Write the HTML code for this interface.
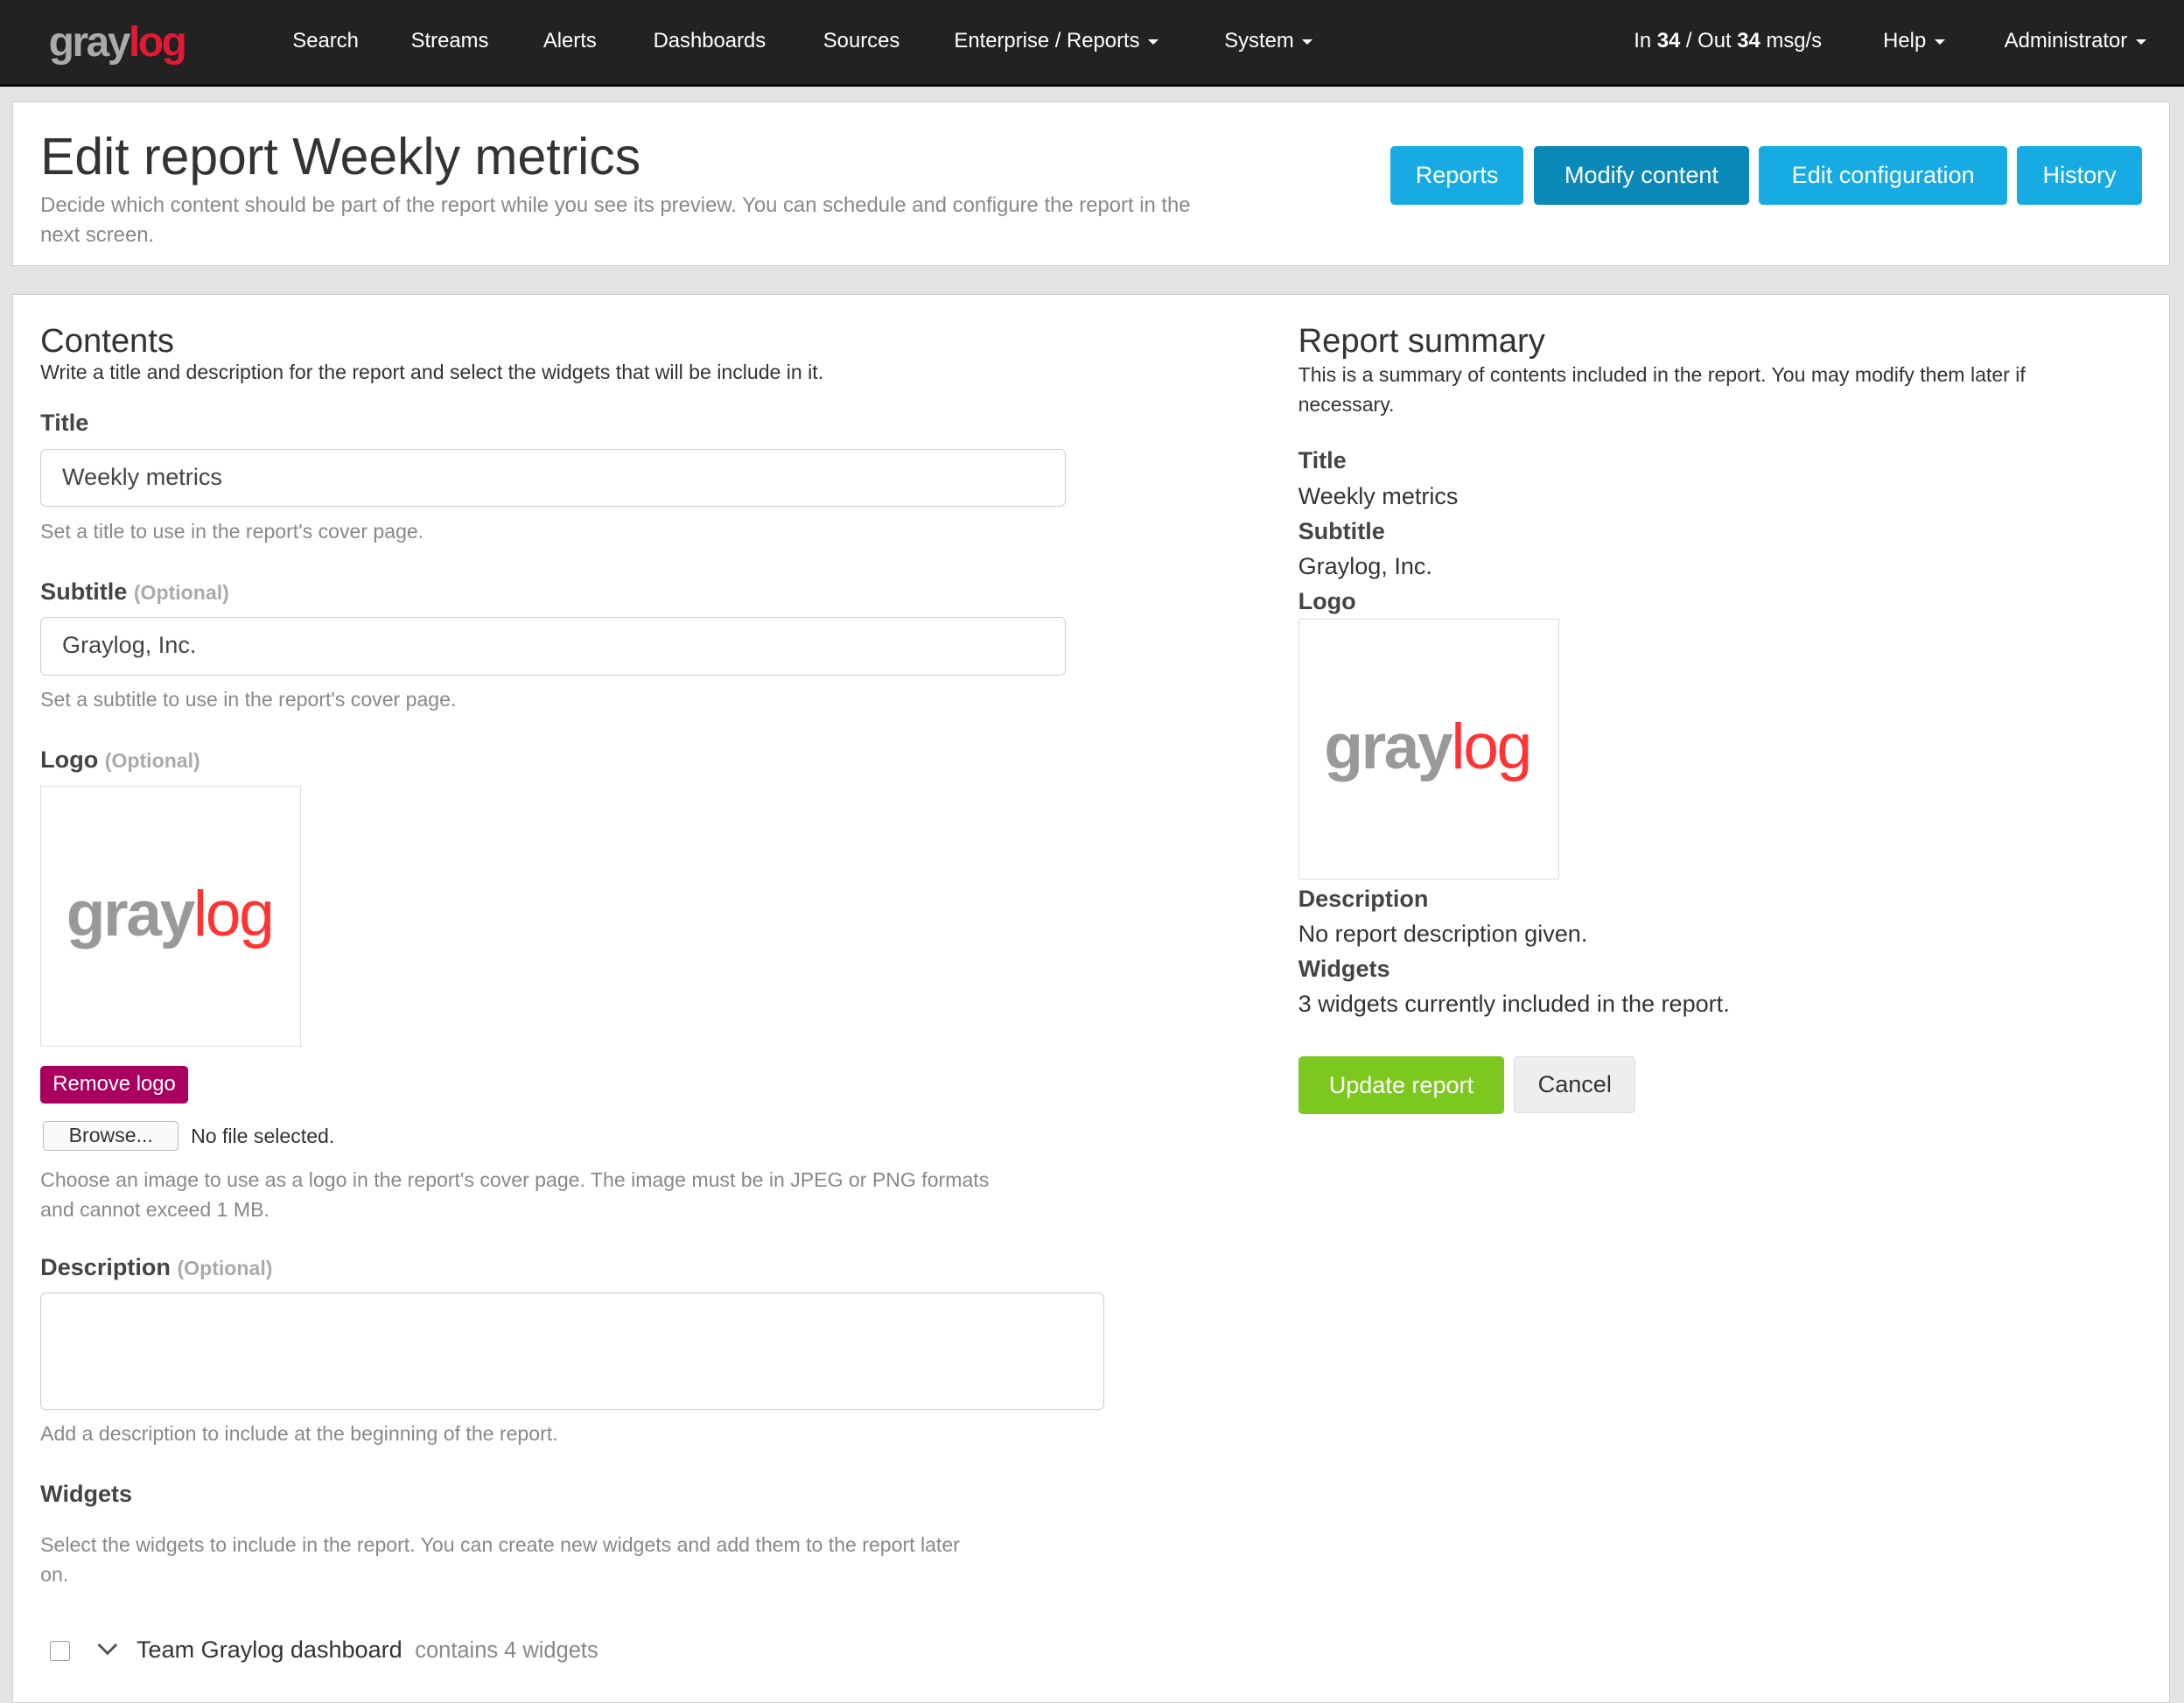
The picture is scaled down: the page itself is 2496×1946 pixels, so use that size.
<!DOCTYPE html>
<html><head><meta charset="utf-8"><style>
html,body{margin:0;padding:0;}
body{width:1568px;height:1204px;overflow:hidden;zoom:1.59184;background:#e3e3e3;font-family:"Liberation Sans",sans-serif;color:#333;position:relative;}
.abs{position:absolute;}
.nav{left:0;top:0;width:1568px;height:60px;background:#222;border-bottom:2px solid #080808;}
.nav span{position:absolute;top:21px;color:#fff;font-size:15px;}
.car{display:inline-block;border-left:4px solid transparent;border-right:4px solid transparent;border-top:4px solid #fff;vertical-align:middle;margin-left:6px;}
.box{background:#fff;border:1px solid #d1d1d1;}
.btn{position:absolute;top:105px;height:42px;line-height:42px;color:#fff;font-size:17px;text-align:center;border-radius:3px;background:#16ace3;}
.gray{color:#888;font-size:14.5px;}
.lbl{font-weight:bold;font-size:17px;color:#444;}
.opt{font-weight:bold;font-size:14.5px;color:#aaa;}
.inp{border:1px solid #ccc;border-radius:4px;background:#fff;box-sizing:border-box;font-size:17px;padding-left:15px;line-height:40px;color:#444;}
.logo{font-weight:bold;letter-spacing:-1.5px;}
</style></head><body>
<div class="abs nav">
 <div class="abs logo" style="left:35px;top:13px;font-size:30px;color:#aaa">gray<span style="position:static;color:#e21a34;font-size:30px">log</span></div>
 <span style="left:210px">Search</span><span style="left:295px">Streams</span><span style="left:390px">Alerts</span><span style="left:469px">Dashboards</span><span style="left:591px">Sources</span><span style="left:685px">Enterprise / Reports<i class="car"></i></span><span style="left:879px">System<i class="car"></i></span>
 <span style="left:1173px">In <b>34</b> / Out <b>34</b> msg/s</span><span style="left:1352px">Help<i class="car"></i></span><span style="left:1439px">Administrator<i class="car"></i></span>
</div>
<div class="abs box" style="left:9px;top:73px;width:1548px;height:117px"></div>
<div class="abs" style="left:29px;top:92px;font-size:37px;color:#333">Edit report Weekly metrics</div>
<div class="abs gray" style="left:29px;top:137px;width:850px;line-height:21px;font-size:15px">Decide which content should be part of the report while you see its preview. You can schedule and configure the report in the next screen.</div>
<div class="btn" style="left:998px;width:96px">Reports</div>
<div class="btn" style="left:1101px;width:155px;background:#0a89b8">Modify content</div>
<div class="btn" style="left:1263px;width:178px">Edit configuration</div>
<div class="btn" style="left:1448px;width:90px">History</div>
<div class="abs box" style="left:9px;top:211px;width:1548px;height:1010px"></div>

<div class="abs" style="left:29px;top:231px;font-size:24px">Contents</div>
<div class="abs" style="left:29px;top:259px;font-size:14.5px">Write a title and description for the report and select the widgets that will be include in it.</div>
<div class="abs lbl" style="left:29px;top:294px">Title</div>
<div class="abs inp" style="left:29px;top:322px;width:736px;height:42px">Weekly metrics</div>
<div class="abs gray" style="left:29px;top:373px">Set a title to use in the report's cover page.</div>
<div class="abs lbl" style="left:29px;top:415px">Subtitle <span class="opt">(Optional)</span></div>
<div class="abs inp" style="left:29px;top:443px;width:736px;height:42px">Graylog, Inc.</div>
<div class="abs gray" style="left:29px;top:494px">Set a subtitle to use in the report's cover page.</div>
<div class="abs lbl" style="left:29px;top:536px">Logo <span class="opt">(Optional)</span></div>
<div class="abs" style="left:29px;top:564px;width:186px;height:186px;border:1px solid #ddd"><div class="abs logo" style="left:18px;top:65px;font-size:46px;color:#999">gray<span style="color:#f33;font-weight:normal">log</span></div></div>
<div class="abs" style="left:29px;top:765px;width:106px;height:27px;line-height:27px;background:#a9005f;color:#fff;border-radius:3px;font-size:15px;text-align:center">Remove logo</div>
<div class="abs" style="left:31px;top:805px;width:96px;height:20px;border:1px solid #bbb;border-radius:3px;font-size:14.5px;text-align:center;line-height:20px;background:#fafafa">Browse...</div>
<div class="abs" style="left:137px;top:807px;font-size:14.5px">No file selected.</div>
<div class="abs gray" style="left:29px;top:837px;width:700px;line-height:21px">Choose an image to use as a logo in the report's cover page. The image must be in JPEG or PNG formats and cannot exceed 1 MB.</div>
<div class="abs lbl" style="left:29px;top:900px">Description <span class="opt">(Optional)</span></div>
<div class="abs inp" style="left:29px;top:928px;width:764px;height:84px"></div>
<div class="abs gray" style="left:29px;top:1021px">Add a description to include at the beginning of the report.</div>
<div class="abs lbl" style="left:29px;top:1063px">Widgets</div>
<div class="abs gray" style="left:29px;top:1099px;width:672px;line-height:21px">Select the widgets to include in the report. You can create new widgets and add them to the report later on.</div>
<div class="abs" style="left:36px;top:1178px;width:13px;height:13px;border:1px solid #999;border-radius:2px"></div>
<div class="abs" style="left:72px;top:1176px;width:8px;height:8px;border-right:2px solid #555;border-bottom:2px solid #555;transform:rotate(45deg)"></div>
<div class="abs" style="left:98px;top:1175px;font-size:17px">Team Graylog dashboard <span class="gray" style="font-size:16px">&nbsp;contains 4 widgets</span></div>

<div class="abs" style="left:932px;top:231px;font-size:24px">Report summary</div>
<div class="abs" style="left:932px;top:259px;width:560px;font-size:14.5px;line-height:21px">This is a summary of contents included in the report. You may modify them later if necessary.</div>
<div class="abs lbl" style="left:932px;top:321px">Title</div>
<div class="abs" style="left:932px;top:347px;font-size:17px">Weekly metrics</div>
<div class="abs lbl" style="left:932px;top:372px">Subtitle</div>
<div class="abs" style="left:932px;top:397px;font-size:17px">Graylog, Inc.</div>
<div class="abs lbl" style="left:932px;top:422px">Logo</div>
<div class="abs" style="left:932px;top:444px;width:186px;height:186px;border:1px solid #ddd"><div class="abs logo" style="left:18px;top:65px;font-size:46px;color:#999">gray<span style="color:#f33;font-weight:normal">log</span></div></div>
<div class="abs lbl" style="left:932px;top:636px">Description</div>
<div class="abs" style="left:932px;top:661px;font-size:17px">No report description given.</div>
<div class="abs lbl" style="left:932px;top:686px">Widgets</div>
<div class="abs" style="left:932px;top:711px;font-size:17px">3 widgets currently included in the report.</div>
<div class="abs" style="left:932px;top:758px;width:148px;height:42px;line-height:42px;background:#7dc81e;color:#fff;font-size:17px;text-align:center;border-radius:3px">Update report</div>
<div class="abs" style="left:1087px;top:758px;width:86px;height:40px;line-height:40px;background:#eee;border:1px solid #ddd;font-size:17px;text-align:center;border-radius:3px">Cancel</div>
</body></html>
